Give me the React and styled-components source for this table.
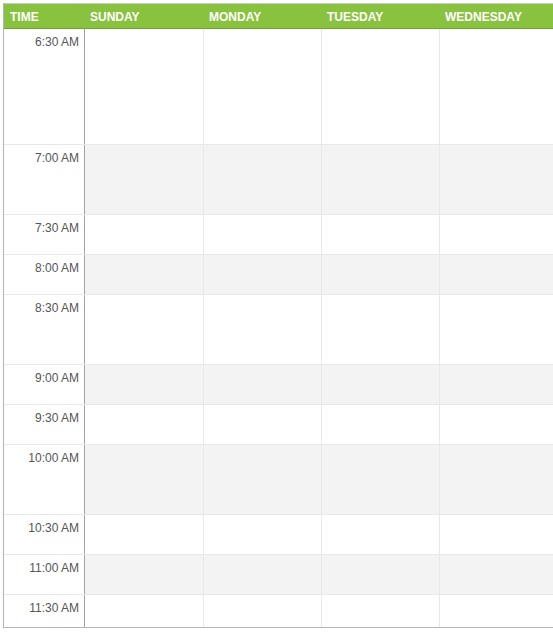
import React from 'react';
import styled, { createGlobalStyle } from 'styled-components';

const DAYS = ['Sunday', 'Monday', 'Tuesday', 'Wednesday'];

const SLOTS = [
  { label: '6:30 AM', height: 115 },
  { label: '7:00 AM', height: 69, shaded: true },
  { label: '7:30 AM', height: 39 },
  { label: '8:00 AM', height: 39, shaded: true },
  { label: '8:30 AM', height: 69 },
  { label: '9:00 AM', height: 39, shaded: true },
  { label: '9:30 AM', height: 39 },
  { label: '10:00 AM', height: 69, shaded: true },
  { label: '10:30 AM', height: 39 },
  { label: '11:00 AM', height: 39, shaded: true },
  { label: '11:30 AM', height: 32, last: true },
];

const COLUMNS = '81px 119px 118px 118px 120px';

const GlobalStyle = createGlobalStyle`
  html, body {
    margin: 0;
    padding: 0;
    background: #fff;
    overflow: hidden;
  }
  body {
    font-family: "Liberation Sans", Arial, sans-serif;
  }
`;

const Page = styled.div`
  padding: 3px 0 0 3px;
  width: 570px;
`;

const Calendar = styled.div`
  border-top: 1px solid #c8c8c8;
  border-left: 1px solid #b4b4b4;
  border-bottom: 1px solid #b4b4b4;
  width: 556px;
  box-shadow: 0 2px 4px rgba(0, 0, 0, 0.04);
`;

const HeaderRow = styled.div`
  display: grid;
  grid-template-columns: ${COLUMNS};
  height: 24px;
  background: #89c23f;
  border-bottom: 1px solid #6ea52c;
`;

const HeaderCell = styled.div`
  padding: 1px 0 0 ${(p) => (p.$time ? '6px' : '5px')};
  color: #fff;
  font-size: 12px;
  font-weight: bold;
  line-height: 24px;
  text-transform: uppercase;
  white-space: nowrap;
`;

const Row = styled.div`
  display: grid;
  grid-template-columns: ${COLUMNS};
  height: ${(p) => p.$height}px;
  border-bottom: ${(p) => (p.$last ? 'none' : '1px solid #e8e8e8')};
`;

const TimeCell = styled.div`
  background: #fff;
  border-right: 1px solid #a3a3a3;
  padding: 6px 5px 0 0;
  color: #555;
  font-size: 12px;
  line-height: 15px;
  text-align: right;
  white-space: nowrap;
`;

const DayCell = styled.div`
  background: ${(p) => (p.$shaded ? '#f3f3f3' : '#fff')};
  border-right: 1px solid #e8e8e8;
`;

export default function App() {
  return (
    <>
      <GlobalStyle />
      <Page>
        <Calendar>
          <HeaderRow>
            <HeaderCell $time>Time</HeaderCell>
            {DAYS.map((day) => (
              <HeaderCell key={day}>{day}</HeaderCell>
            ))}
          </HeaderRow>
          {SLOTS.map((slot) => (
            <Row key={slot.label} $height={slot.height} $last={slot.last}>
              <TimeCell>{slot.label}</TimeCell>
              {DAYS.map((day) => (
                <DayCell key={day} $shaded={slot.shaded} />
              ))}
            </Row>
          ))}
        </Calendar>
      </Page>
    </>
  );
}
